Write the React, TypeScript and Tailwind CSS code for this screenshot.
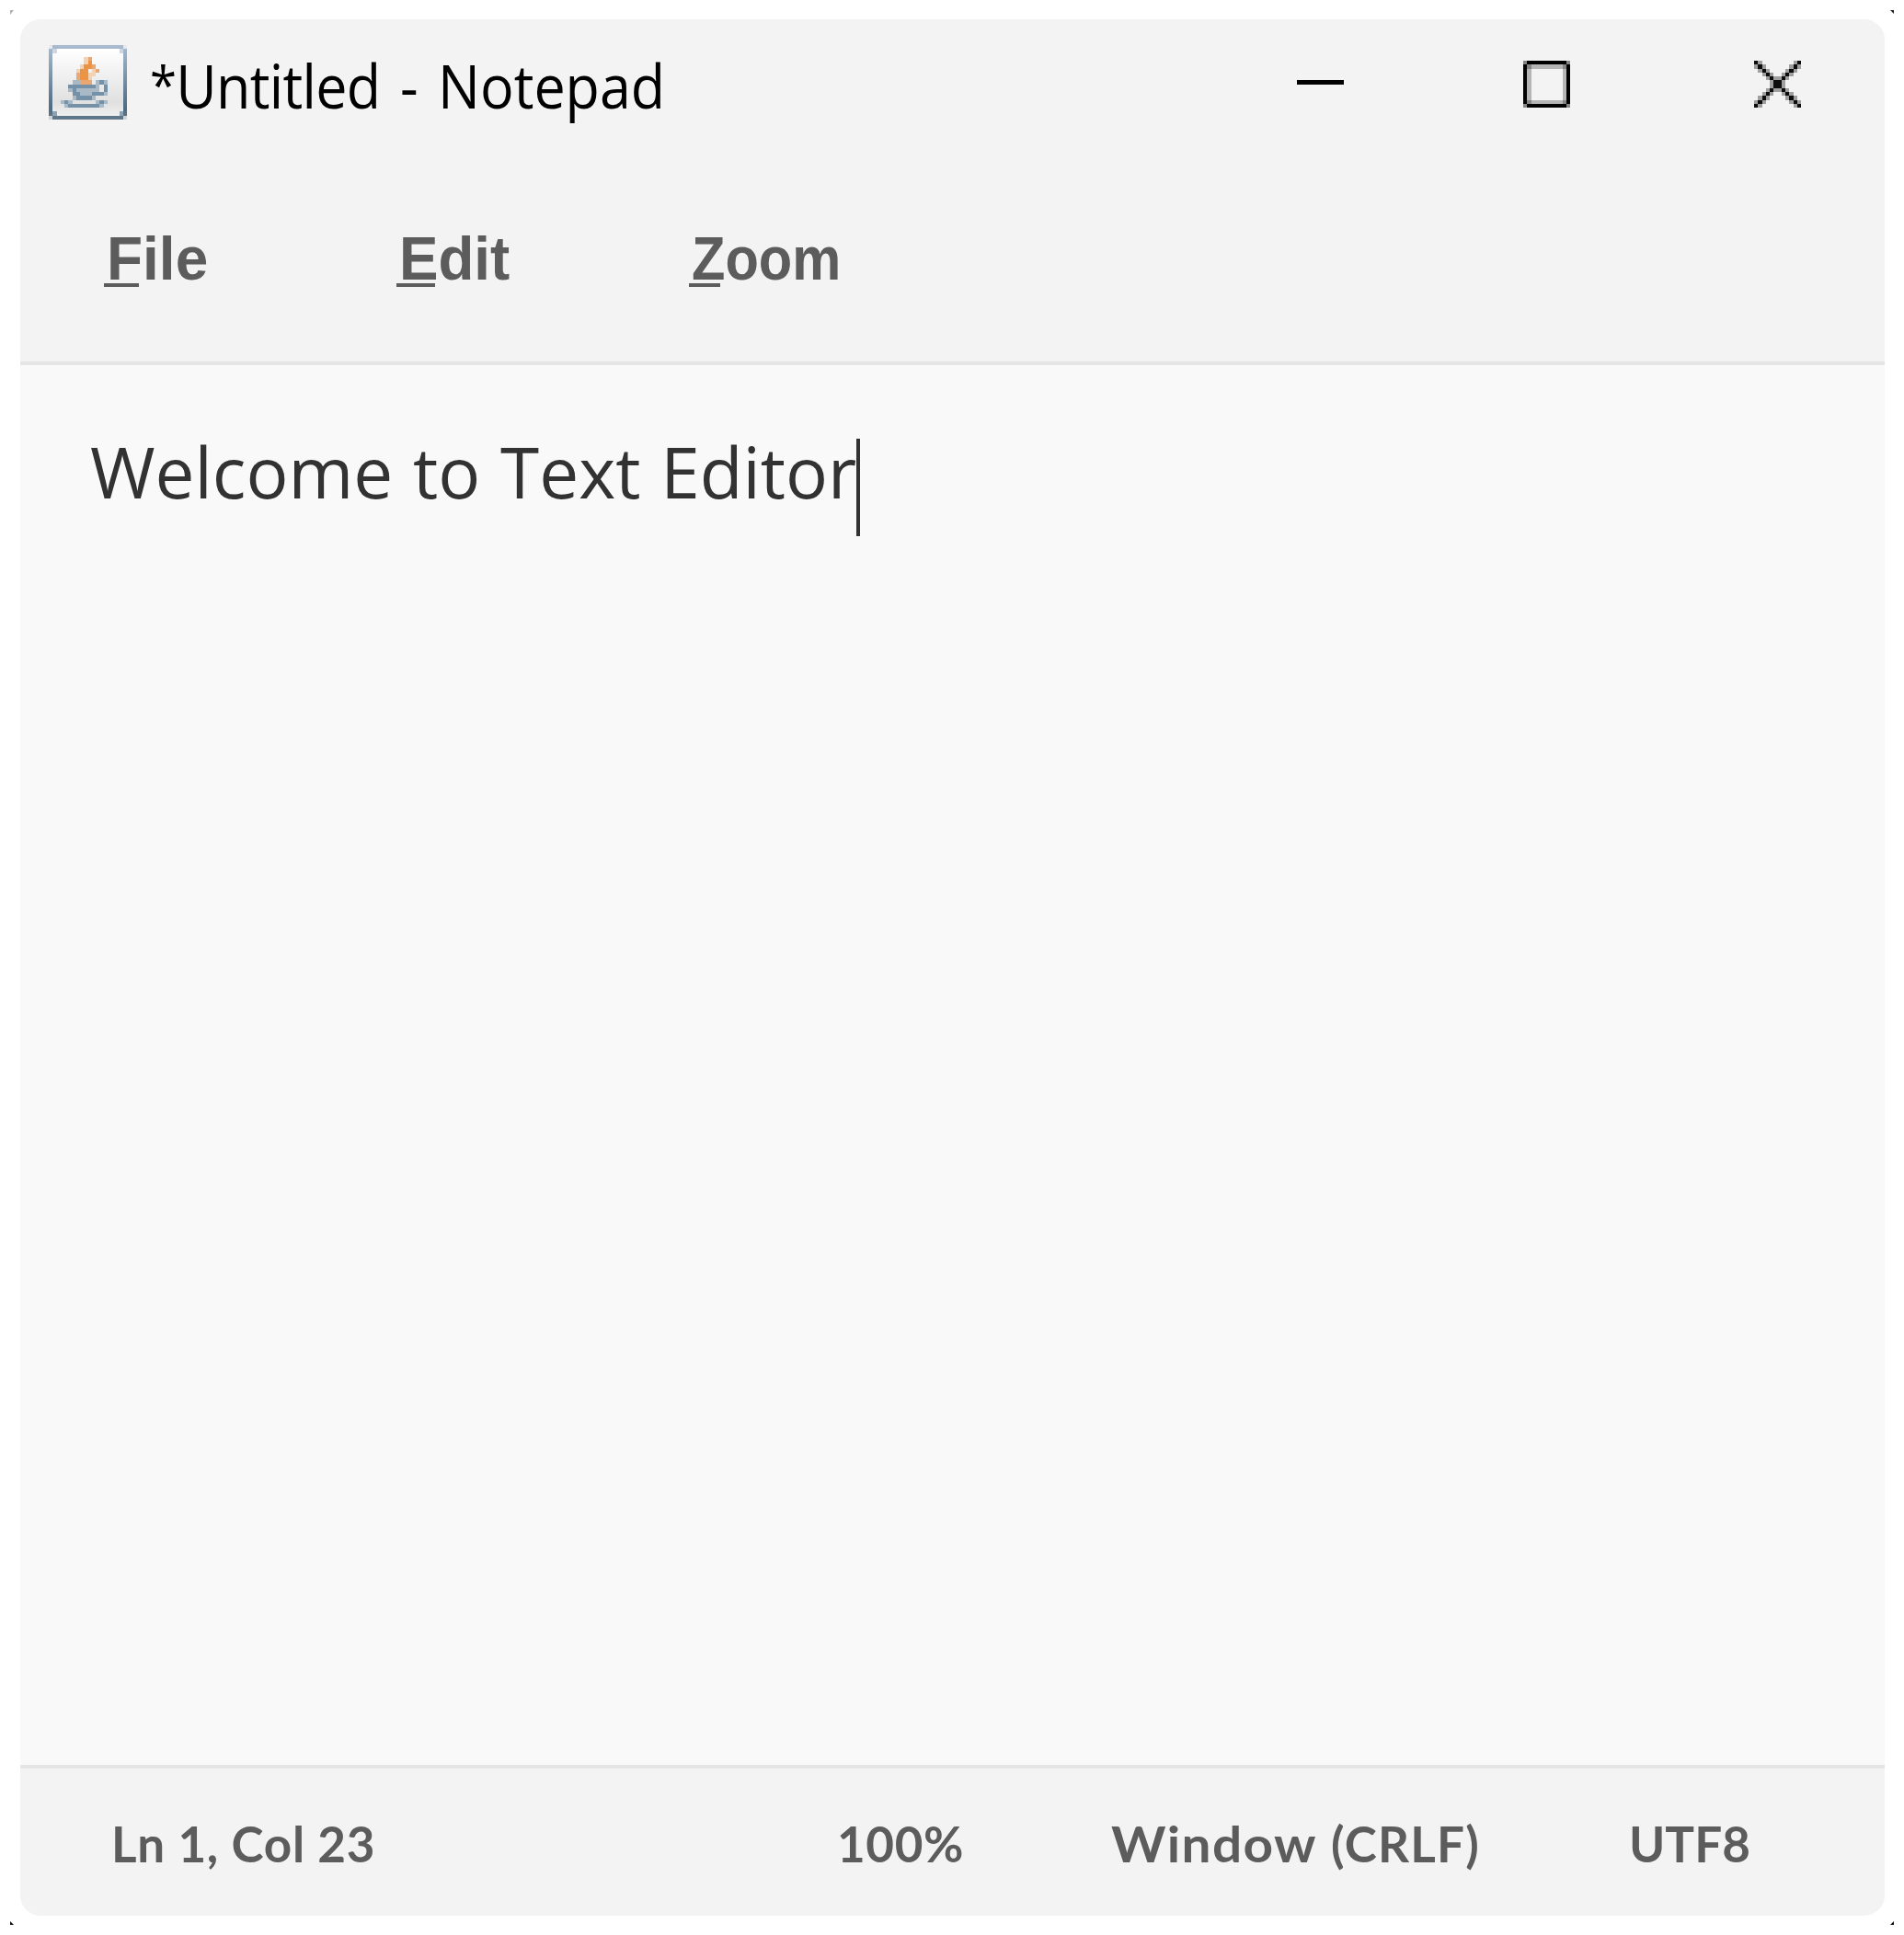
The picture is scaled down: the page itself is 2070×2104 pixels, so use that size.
import React from "react";

const DARK = "#7591a7";
const PALE = "#a9b9c5";

const javaCells: [string, string][] = [
  ["#f3d3b4", "M9 3h1v1H9z M9 4h1v1H9z M8 5h1v1H8z M11 5h1v1h-1z M11 6h2v1h-2z M10 7h2v1h-2z M10 8h1v1h-1z M7 6h1v1H7z"],
  ["#eb9445", "M10 4h1v1h-1z M9 5h2v1H9z M8 6h2v1H8z M8 7h2v1H8z M8 8h2v1H8z"],
  ["#e9a873", "M10 3h1v1h-1z M7 7h1v2H7z M8 9h3v1H8z M12 6h1v1h-1z M11 5h1v1h-1z"],
  [PALE, "M6 9h2v1H6z M12 9h1v1h-1z M14 9h1v1h-1z M12 10h1v1h-1z M5 11h1v1H5z M7 11h5v1H7z M12 11h1v1h-1z M8 12h3v1H8z M14 12h1v1h-1z M6 13h1v1H6z M11 13h1v1h-1z M3 14h1v1H3z M5 14h1v1H5z M12 14h1v1h-1z M14 14h1v1h-1z M4 15h1v1H4z M13 15h1v1h-1z"],
  [DARK, "M13 9h1v1h-1z M5 10h7v1H5z M14 10h1v2h-1z M6 11h1v2H6z M7 12h1v1H7z M11 12h3v1h-3z M7 13h4v1H7z M4 14h1v1H4z M13 14h1v1h-1z M5 15h8v1H5z"],
];

function JavaIcon() {
  return (
    <svg className="h-[81px] w-[85px] shrink-0" viewBox="0 0 20 19" preserveAspectRatio="none" shapeRendering="crispEdges">
      <defs>
        <linearGradient id="edge" x1="0" y1="0" x2="0" y2="1">
          <stop offset="0" stopColor="#a9bcd2" />
          <stop offset="0.85" stopColor="#4d6b82" />
          <stop offset="1" stopColor="#62798b" />
        </linearGradient>
        <linearGradient id="face" x1="0" y1="0" x2="0" y2="1">
          <stop offset="0" stopColor="#ffffff" />
          <stop offset="0.8" stopColor="#e0e0e0" />
          <stop offset="1" stopColor="#efefef" />
        </linearGradient>
      </defs>
      <path d="M1 0H19V1H20V18H19V19H1V18H0V1H1z" fill="url(#edge)" />
      <path d="M0 0h1v1H0zM19 0h1v1h-1z" fill="#e6eaee" />
      <path d="M0 18h1v1H0zM19 18h1v1h-1z" fill="#ced5da" />
      <rect x="1" y="1" width="18" height="17" fill="url(#face)" />
      <path d="M1 1h1v1H1zM18 1h1v1h-1z" fill="#ccd7e2" />
      <path d="M1 17h1v1H1zM18 17h1v1h-1z" fill="#8fa2b1" />
      {javaCells.map(([fill, d]) => (
        <path key={fill} fill={fill} d={d} />
      ))}
    </svg>
  );
}

function MinimizeIcon() {
  return (
    <svg className="size-[51px]" viewBox="0 0 12 12" shapeRendering="crispEdges">
      <path d="M0 5h12v1H0z" fill="#000" />
    </svg>
  );
}

function MaximizeIcon() {
  return (
    <svg className="size-[51px]" viewBox="0 0 12 12" shapeRendering="crispEdges">
      <path d="M1 0h10v1H1zM1 11h10v1H1zM0 1h1v10H0zM11 1h1v10h-1z" fill="#000" />
      <path d="M2 1h8v1H2zM2 10h8v1H2zM1 2h1v8H1zM10 2h1v8h-1z" fill="#b5b5b5" />
      <path d="M0 0h1v1H0zM11 0h1v1h-1zM0 11h1v1H0zM11 11h1v1h-1zM1 1h1v1H1zM10 1h1v1h-1zM1 10h1v1H1zM10 10h1v1h-1z" fill="#858585" />
    </svg>
  );
}

function CloseIcon() {
  const steps = Array.from({ length: 12 }, (_, i) => i);
  return (
    <svg className="size-[51px]" viewBox="0 0 12 12" shapeRendering="crispEdges">
      {steps.slice(0, 11).map((i) => (
        <path key={i} fill="#9f9f9f" d={`M${i + 1} ${i}h1v1h-1zM${i} ${i + 1}h1v1h-1zM${10 - i} ${i}h1v1h-1zM${11 - i} ${i + 1}h1v1h-1z`} />
      ))}
      {steps.map((i) => (
        <path key={i} fill="#0d0d0d" d={`M${i} ${i}h1v1h-1zM${11 - i} ${i}h1v1h-1z`} />
      ))}
    </svg>
  );
}

const menus = [
  { label: "File", text: "ml-[3px] scale-x-[0.955]", line: "w-[38px]" },
  { label: "Edit", text: "ml-[3px] scale-x-[0.95]", line: "w-[42px]" },
  { label: "Zoom", text: "ml-[3px] scale-x-[0.89]", line: "w-[34px]" },
];

export default function App() {
  return (
    <div className="relative h-[2104px] w-[2070px] overflow-hidden bg-white pt-[21px] pl-[22px]">
      <div className="flex h-[2062px] w-[2027px] flex-col overflow-hidden rounded-[22px] bg-[#f3f3f3]">
        <header className="flex h-[169px] shrink-0 items-start pt-[28px] pr-[91px] pl-[31px]">
          <JavaIcon />
          <h1 className="-mt-px ml-[25px] flex h-[90px] origin-left scale-x-[0.938] whitespace-nowrap font-['Open_Sans',sans-serif] text-[65px] leading-[90px] text-black [word-spacing:6px]">
            <span className="w-[30px] text-[56px] leading-[86px]">*</span>
            <span>
              <span className="tracking-[-0.7px]">Untitled</span> - Notepad
            </span>
          </h1>
          <div className="mt-[17px] ml-auto flex">
            <button aria-label="Minimize" className="mr-[195px]">
              <MinimizeIcon />
            </button>
            <button aria-label="Maximize" className="mr-[200px]">
              <MaximizeIcon />
            </button>
            <button aria-label="Close">
              <CloseIcon />
            </button>
          </div>
        </header>

        <nav className="flex h-[207px] shrink-0 border-b-4 border-[#e5e5e5] pt-[51px] pl-[91px]">
          {menus.map((m) => (
            <div key={m.label} className="relative h-[80px] w-[318px]">
              <button className={`block origin-left whitespace-nowrap font-['Liberation_Sans',sans-serif] text-[67px] leading-[80px] font-bold text-[#5c5c5c] ${m.text}`}>
                {m.label}
              </button>
              <span className={`absolute top-[67px] left-0 h-1 bg-[#5c5c5c] ${m.line}`} />
            </div>
          ))}
        </nav>

        <main className="flex flex-1 items-start bg-[#f9f9f9] pt-[63px] pl-[76px]">
          <p className="w-[833px] origin-left scale-x-[0.993] whitespace-nowrap font-['Open_Sans',sans-serif] text-[77px] leading-[106px] text-[#323232] [word-spacing:2px]">
            Welcome to Text Editor
          </p>
          <span className="mt-[17px] h-[106px] w-1 bg-[#323232]" />
        </main>

        <footer className="grid h-[164px] shrink-0 grid-cols-[789px_298px_563px_auto] items-center border-t-4 border-[#e5e5e5] pt-1 pl-[99px] font-['Lato',sans-serif] text-[53px] leading-[60px] font-bold whitespace-nowrap text-[#5c5c5c]">
          <span className="tracking-[0.7px]">Ln 1, Col 23</span>
          <span className="tracking-[0.6px]">100%</span>
          <span className="flex">
            <span className="w-[239px] origin-left scale-x-[1.07] tracking-[1.3px]">Window</span>
            <span className="tracking-[1.2px]">(CRLF)</span>
          </span>
          <span>UTF8</span>
        </footer>
      </div>

      <svg className="absolute top-[11px] left-[11px] size-[5px]" viewBox="0 0 5 5">
        <path d="M0 0h4L0 5z" fill="#b3b1ac" />
      </svg>
      <svg className="absolute top-[11px] left-[2055px] size-[4px]" viewBox="0 0 4 4">
        <path d="M0 0h4v4z" fill="#222" />
      </svg>
      <svg className="absolute top-[2089px] left-[11px] size-[4px]" viewBox="0 0 4 4">
        <path d="M0 0v4h4z" fill="#111" />
      </svg>
      <svg className="absolute top-[2089px] left-[2055px] size-[4px]" viewBox="0 0 4 4">
        <path d="M4 0v4H0z" fill="#111" />
      </svg>
    </div>
  );
}
